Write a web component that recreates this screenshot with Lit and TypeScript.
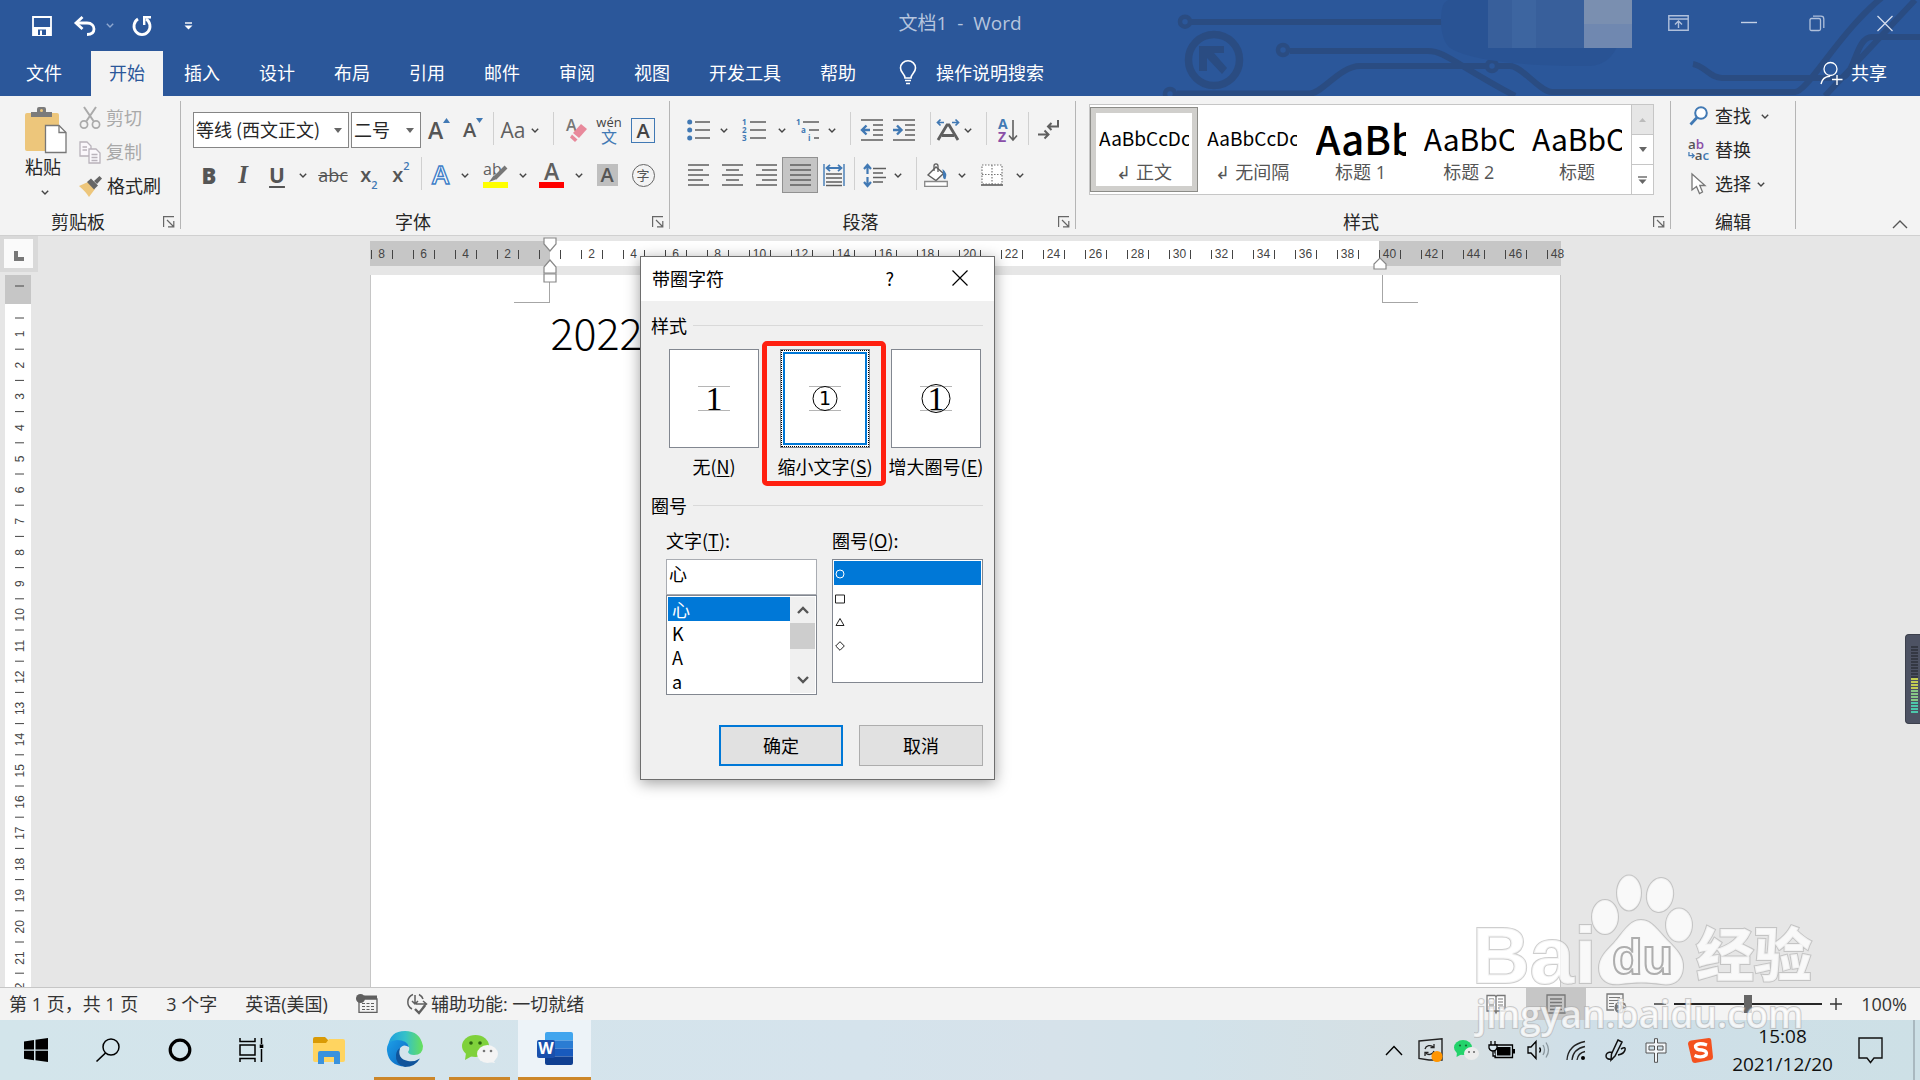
import { LitElement, html, svg, css, nothing } from "lit";
import { customElement, state } from "lit/decorators.js";
import { classMap } from "lit/directives/class-map.js";

const pic = (w: number, h: number, body: unknown) =>
  html`<svg class="pic" width=${w} height=${h} viewBox="0 0 ${w} ${h}" aria-hidden="true">${body}</svg>`;

const GREY = "#5f5f5f";
const BLUE = "#4179b4";

const chevron = (color = "#444") =>
  pic(8, 5, svg`<path d="M.8 .8L4 4L7.2 .8" fill="none" stroke=${color} stroke-width="1.4"/>`);
const triangle = (color = "#666") => pic(8, 5, svg`<path d="M0 0H8L4 5Z" fill=${color}/>`);

/* Horizontal strokes given as [x1, x2, y] */
const strokes = (rows: number[][], color = GREY, width = 1.5) =>
  svg`<path d=${rows.map(([a, b, y]) => `M${a} ${y}H${b}`).join("")} stroke=${color} stroke-width=${width} fill="none"/>`;

const icons = {
  save: pic(20, 20, svg`<path d="M1 1H19V19H1Z" fill="none" stroke="#fff" stroke-width="1.8"/><path d="M1 11H19V19H1Z" fill="#fff"/><path d="M6 13.5H14V19H6Z" fill="#2b579a"/><path d="M8 14.5H10V19H8Z" fill="#fff"/>`),
  undo: pic(22, 20, svg`<path d="M2 7H13C18 7 20 10 20 13S18 18.500 13 18.500" fill="none" stroke="#fff" stroke-width="2.800"/><path d="M8.500 1L2 7L8.500 13" fill="none" stroke="#fff" stroke-width="2.800"/>`),
  redo: pic(20, 20, svg`<path d="M6 3A8 8.400 0 1 0 14 3" fill="none" stroke="#fff" stroke-width="2.800"/><path d="M11 1.200H19M12.200 1V9" fill="none" stroke="#fff" stroke-width="2.400"/>`),
  custom: pic(9, 8, svg`<path d="M1 1H8" stroke="#fff" stroke-width="1.400"/><path d="M.5 3.500H8.500L4.500 7.500Z" fill="#fff"/>`),
  bulb: pic(18, 25, svg`<path d="M6 18C6 14 1.500 13 1.500 8A7.500 7.200 0 0 1 16.500 8C16.500 13 12 14 12 18Z" fill="none" stroke="#fff" stroke-width="1.600"/><path d="M6 20.500H12M7 23.500H11" stroke="#fff" stroke-width="1.500"/>`),
  ribbonOpts: pic(21, 17, svg`<path d="M.8 .8H20.200V15.200H.8ZM.8 4H20.200M10.500 13V6.500M7 9.500L10.500 6L14 9.500" fill="none" stroke="#b0c0db" stroke-width="1.400"/>`),
  minimize: pic(16, 17, svg`<path d="M0 7.500H16" stroke="#c4d0e4" stroke-width="1.400"/>`),
  restore: pic(16, 17, svg`<path d="M1 5Q1 3.500 2.500 3.500H10Q11.500 3.500 11.500 5V14Q11.500 15.500 10 15.500H2.500Q1 15.500 1 14ZM4 1.200H12Q14.800 1.200 14.800 4V13" fill="none" stroke="#b0c0db" stroke-width="1.300"/>`),
  close: pic(16, 17, svg`<path d="M.5 1L15.500 16M15.500 1L.5 16" stroke="#d5dded" stroke-width="1.300"/>`),
  share: pic(23, 24, svg`<circle cx="10.500" cy="8" r="6.500" fill="none" stroke="#fff" stroke-width="1.300"/><path d="M1 23Q2.500 15.500 10 15.200M17 14V24M12 18.500H22.500" fill="none" stroke="#fff" stroke-width="1.400"/>`),
  paste: pic(42, 47, svg`<rect x="0" y="6" width="34" height="38" rx="2" fill="#edc67b"/><path d="M6 5H12V2Q12 0 14 0H19Q21 0 21 2V5H27V10H6Z" fill="#7b7b7b"/><circle cx="16.500" cy="3.500" r="1.500" fill="#edc67b"/><path d="M20.500 18.500H34L41 25.500V45.500H20.500Z" fill="#fff" stroke="#777" stroke-width="1.300"/><path d="M34 18.500V25.500H41" fill="none" stroke="#777" stroke-width="1.300"/>`),
  cut: pic(22, 22, svg`<path d="M5 0L14.500 14M17 0L7.500 14" stroke="#aaa" stroke-width="2"/><circle cx="5" cy="17.500" r="3.600" fill="none" stroke="#aaa" stroke-width="1.700"/><circle cx="17" cy="17.500" r="3.600" fill="none" stroke="#aaa" stroke-width="1.700"/>`),
  copy: pic(22, 23, svg`<g fill="#faf7fb" stroke="#b9b3bb" stroke-width="1.300"><path d="M1 1H8L12 5V15H1Z"/><path d="M10 8H17L21 12V22H10Z"/><path d="M3.500 6H8M3.500 9H8M12.500 13.500H18.500M12.500 16.500H18.500M12.500 19.500H18.500"/></g>`),
  brush: pic(23, 21, svg`<path d="M0 10L9 6L16 13L10 21Q7 16 0 10Z" fill="#edc67b"/><path d="M8 6L12 2.500L19 9.500L15 13.500Z" fill="#666"/><path d="M15 5L20.500 0L23 2.500L18 8Z" fill="#666"/>`),
  launch: pic(12, 12, svg`<path d="M.6 11V.6H11M4 4L10.500 10.500M10.800 5V10.800H5" fill="none" stroke="#666" stroke-width="1.200"/>`),
  bullets: pic(23, 22, svg`<g fill=${BLUE}><circle cx="2.700" cy="3" r="2.500"/><circle cx="2.700" cy="11" r="2.500"/><circle cx="2.700" cy="19" r="2.500"/></g>${strokes([[8, 23, 3], [8, 23, 11], [8, 23, 19]])}`),
  numbering: pic(24, 24, svg`${strokes([[8, 24, 4], [8, 24, 12], [8, 24, 20]])}<g class="tiny"><text x="0" y="7">1</text><text x="0" y="15">2</text><text x="0" y="23">3</text></g>`),
  multilevel: pic(24, 24, svg`${strokes([[7, 23, 4], [13, 23, 12], [18, 23, 20]])}<g class="tiny"><text x="0" y="7">1</text><text x="5" y="15">a</text><text x="12" y="23">i</text></g>`),
  outdent: pic(22, 22, svg`${strokes([[0, 22, 1], [12, 22, 6], [12, 22, 11], [12, 22, 16], [0, 22, 21]])}<path d="M9 11H2M5.500 6.500L1 11L5.500 15.500" fill="none" stroke=${BLUE} stroke-width="2.400"/>`),
  indent: pic(22, 22, svg`${strokes([[0, 22, 1], [12, 22, 6], [12, 22, 11], [12, 22, 16], [0, 22, 21]])}<path d="M0 11H7M4 6.500L8.500 11L4 15.500" fill="none" stroke=${BLUE} stroke-width="2.400"/>`),
  scaleA: pic(24, 22, svg`<path d="M8 3.500H1.500M4.500 .5L1.500 3.500L4.500 6.500M16 3.500H22.500M19.500 .5L22.500 3.500L19.500 6.500" fill="none" stroke=${BLUE} stroke-width="1.700"/><path d="M2 21L11 6H13L22 21M6 16.500H18" fill="none" stroke=${GREY} stroke-width="2.800"/>`),
  sort: pic(20, 24, svg`<text class="sortA" x="0" y="11">A</text><text class="sortZ" x="0" y="24">Z</text><path d="M15 2V21M11 17.500L15 22L19 17.500" fill="none" stroke=${GREY} stroke-width="1.600"/>`),
  marks: pic(21, 20, svg`<path d="M20 0V6.500H10M13.500 3L10 6.500L13.500 10M0 14.500H10M6.500 10.500L10.500 14.500L6.500 18.500" fill="none" stroke=${GREY} stroke-width="2"/>`),
  left: pic(21, 22, strokes([[0, 21, 1], [0, 15, 6], [0, 21, 11], [0, 15, 16], [0, 21, 21]])),
  center: pic(21, 22, strokes([[0, 21, 1], [4, 17, 6], [0, 21, 11], [4, 17, 16], [0, 21, 21]])),
  right: pic(21, 22, strokes([[0, 21, 1], [6, 21, 6], [0, 21, 11], [6, 21, 16], [0, 21, 21]])),
  justify: pic(21, 22, strokes([[0, 21, 1], [0, 21, 6], [0, 21, 11], [0, 21, 16], [0, 21, 21]])),
  spread: pic(22, 22, svg`${strokes([[3, 19, 10], [3, 19, 14], [3, 19, 18], [3, 19, 21.5]])}<path d="M1 0V22M21 0V22" stroke=${BLUE} stroke-width="1.400"/><path d="M4 4H18M7 .8L3.500 4L7 7.200M15 .8L18.500 4L15 7.200" fill="none" stroke=${BLUE} stroke-width="1.800"/>`),
  lineGap: pic(23, 23, svg`${strokes([[10, 23, 4.5], [10, 20, 9], [10, 23, 13.5], [10, 20, 18]])}<path d="M4.500 1V10M1 5L4.500 1L8 5M4.500 13V22M1 18L4.500 22L8 18" fill="none" stroke=${BLUE} stroke-width="2.200"/>`),
  bucket: pic(25, 24, svg`<path d="M4 12L12 4L19.500 10.500L12 17.500Z" fill="#fff" stroke=${GREY} stroke-width="1.400"/><path d="M10 8V3Q10 .8 12 .8T14 3V9" fill="none" stroke=${GREY} stroke-width="1.300"/><path d="M18.500 6Q24 10 21.500 16Q18.500 17 19 11Z" fill=${BLUE}/><path d="M.7 18.500H23.300V23.300H.7Z" fill="#fff" stroke="#888" stroke-width="1.300"/>`),
  borders: pic(22, 22, svg`<path d="M1 1H21V20H1ZM11 1V20M1 10.500H21" fill="#fff" stroke="#777" stroke-width="1.200" stroke-dasharray="1.500 1.500"/><path d="M0 21H22" stroke=${GREY} stroke-width="1.600"/>`),
  find: pic(19, 20, svg`<circle cx="12" cy="7" r="5.800" fill="#fff" stroke=${BLUE} stroke-width="2"/><path d="M8 11.500L1.500 18.500" stroke=${BLUE} stroke-width="2.800"/>`),
  pointer: pic(15, 22, svg`<path d="M1 1V17L5.500 13.500L8.500 20.500L11.500 19L8.800 12.500H14Z" fill="#fff" stroke="#777" stroke-width="1.300"/>`),
  collapse: pic(16, 9, svg`<path d="M1 8L8 1L15 8" fill="none" stroke="#555" stroke-width="1.400"/>`),
  macro: pic(22, 19, svg`<path d="M3 5H21V18.300H3Z" fill="#f3f3f3" stroke=${GREY} stroke-width="1.300"/><path d="M8 1.500H21V5H8Z" fill=${GREY}/><circle cx="4.500" cy="4.500" r="4.500" fill=${GREY}/><path d="M6 9.500H18M6 12.500H18M6 15.500H18" stroke=${GREY} stroke-width="1.200" stroke-dasharray="3 1.500"/>`),
  access: pic(22, 22, svg`<path d="M7 1.500A8 8 0 0 0 6 16M13 1.500A8 8 0 0 1 17 6M9 2V11M6 8L9 11L12 8M10 11H20M17 8L20.500 11L17 14" fill="none" stroke=${GREY} stroke-width="1.500"/><path d="M9 16L13 20L19 12.500" fill="none" stroke=${GREY} stroke-width="2.400"/>`),
  read: pic(20, 20, svg`<path d="M1 1.500H9L10 3L11 1.500H19V17H11L10 19L9 17H1ZM10 3V19" fill="#fff" stroke="#777" stroke-width="1.300"/>${strokes([[3, 8, 5], [3, 8, 8], [3, 8, 11], [3, 8, 14], [12, 17, 5], [12, 17, 8], [12, 17, 11], [12, 17, 14]], "#777", 1.2)}`),
  print: pic(20, 20, svg`<path d="M1 1H19V19H1Z" fill="none" stroke="#777" stroke-width="1.300"/>${strokes([[4, 16, 5], [4, 16, 8.5], [4, 16, 12], [4, 16, 15.5]], "#777", 1.3)}`),
  web: pic(21, 21, svg`<path d="M8 17H1V1H17V8" fill="none" stroke="#777" stroke-width="1.300"/>${strokes([[3, 14, 4.5], [3, 14, 7.5], [3, 8, 10.5], [3, 8, 13.5]], "#777", 1.2)}<circle cx="14.500" cy="14.500" r="6" fill="#777"/><path d="M11 11Q14 11 14 14T11 16M16 10.500Q16 13 19.500 13.500M15 19Q15 16 18 16.500" stroke="#eee" stroke-width="1.300" fill="none"/>`),
  windows: pic(24, 24, svg`<path d="M0 3.500L10 2V11.500H0ZM11.500 1.800L24 0V11.500H11.500ZM0 12.700H10V22.200L0 20.700ZM11.500 12.700H24V24L11.500 22.300Z" fill="#000"/>`),
  search: pic(26, 24, svg`<circle cx="16" cy="9" r="8" fill="none" stroke="#000" stroke-width="1.500"/><path d="M10.500 15L1.500 23.500" stroke="#000" stroke-width="1.700"/>`),
  cortana: pic(24, 24, svg`<circle cx="12" cy="12" r="9.800" fill="none" stroke="#000" stroke-width="3.200"/>`),
  taskview: pic(26, 24, svg`<path d="M1 0V3.500H16V0M1 24V20.500H16V24M1 7H16V17H1ZM22.500 0V6M22.500 11V24" fill="none" stroke="#000" stroke-width="1.500"/><path d="M20.700 6.500H24.300V10H20.700Z"/>`),
  folder: pic(32, 27, svg`<path d="M0 2Q0 0 2 0H12L15 3V8H0Z" fill="#d99a06"/><path d="M0 6H13L16 2H30Q32 2 32 4V23Q32 25 30 25H2Q0 25 0 23Z" fill="#ffd460"/><path d="M5 27V16Q5 14 7 14H25Q27 14 27 16V27H21V20H11V27Z" fill="#3a92dd"/>`),
  edge: pic(36, 36, svg`
    <defs>
      <linearGradient id="edgeTop" x1="0" x2="1"><stop offset="0" stop-color="#1c9de0"/><stop offset=".5" stop-color="#35c1c8"/><stop offset="1" stop-color="#67e05a"/></linearGradient>
      <linearGradient id="edgeLeft" x1="0" y1="0" x2="1" y2="1"><stop offset="0" stop-color="#1d9fe8"/><stop offset="1" stop-color="#0a63bd"/></linearGradient>
    </defs>
    <path d="M1 15Q3 0 18 0T36 15Q36 24 27 24Q22 24 21 21Q24 17 20 13Q12 6 1 15Z" fill="url(#edgeTop)"/>
    <path d="M0 20Q-1 10 10 9Q20 9 22 16Q16 12 12.500 18Q9 27 18 35.500Q2 35 0 20Z" fill="url(#edgeLeft)"/>
    <path d="M13 17Q10 28 21 30Q28 31 33 27.500Q28 36 18 36Q8 33 9 24Q9.500 19 13 17Z" fill="#10549b"/>`),
  wechat: pic(36, 28, svg`<ellipse cx="13.500" cy="11" rx="13.500" ry="11" fill="#7fd13b"/><path d="M4 18L3 25L10 21Z" fill="#7fd13b"/><circle cx="9" cy="8" r="1.800" fill="#2c6410"/><circle cx="18" cy="8" r="1.800" fill="#2c6410"/><ellipse cx="25.500" cy="19" rx="10.500" ry="9" fill="#f4f4f4"/><path d="M31 25L33 28L27 27Z" fill="#f4f4f4"/><circle cx="22" cy="16" r="1.300" fill="#777"/><circle cx="29" cy="16" r="1.300" fill="#777"/>`),
  word: pic(36, 33, svg`<path d="M8 2Q8 0 10 0H34Q36 0 36 2V8.500H8Z" fill="#41a5ee"/><path d="M8 8.500H36V16.500H8Z" fill="#2b7cd3"/><path d="M8 16.500H36V24.500H8Z" fill="#185abd"/><path d="M8 24.500H36V31Q36 33 34 33H10Q8 33 8 31Z" fill="#103f91"/><rect x="0" y="8" width="18" height="18" rx="2" fill="#1a50ac"/><text class="wordW" x="9" y="22" text-anchor="middle">W</text>`),
  trayUp: pic(18, 11, svg`<path d="M1 10L9 1.500L17 10" fill="none" stroke="#000" stroke-width="1.400"/>`),
  traySync: pic(25, 24, svg`<path d="M1 3L24 .8V22H11L1 20.500Z" fill="none" stroke="#222" stroke-width="1.400"/><path d="M7 11A5 4.500 0 0 1 15.500 9M16 6V9.500H12.500M16 13A5 4.500 0 0 1 8 15.500M7 18V14.500H10.500" fill="none" stroke="#222" stroke-width="1.300"/><circle cx="19" cy="18.500" r="5.500" fill="#ff9500"/>`),
  trayChat: pic(25, 20, svg`<ellipse cx="9" cy="7.500" rx="9" ry="7.500" fill="#23d36b"/><path d="M3 12L2.500 17L8 14Z" fill="#23d36b"/><circle cx="6" cy="5.500" r="1.100" fill="#156b35"/><circle cx="12" cy="5.500" r="1.100" fill="#156b35"/><ellipse cx="17.500" cy="13.500" rx="7.500" ry="6.500" fill="#ececec"/><circle cx="15" cy="12" r="1" fill="#666"/><circle cx="20" cy="12" r="1" fill="#666"/>`),
  battery: pic(26, 18, svg`<path d="M6 4H23.500V16.500H6Z" fill="none" stroke="#000" stroke-width="1.300"/><path d="M8 6H21.500V14.500H8ZM24 8H26V12.500H24Z"/><path d="M2 0V4M6 0V4M0 4H8V7Q7 10 4 10Q1 10 0 7ZM4 10V15H7" fill="#d5e4ec" stroke="#000" stroke-width="1.300"/>`),
  speaker: pic(23, 20, svg`<path d="M1 7H4L9 1.500V18.500L4 13H1Z" fill="none" stroke="#000" stroke-width="1.300"/><path d="M12.500 7.500Q14.500 10 12.500 12.500" fill="none" stroke="#000" stroke-width="1.300"/><path d="M16 5Q19 10 16 15M19 2.500Q24 10 19 17.500" fill="none" stroke="#8a979e" stroke-width="1.300"/>`),
  wifi: pic(20, 21, svg`<path d="M1 20Q2 5 19 1.500M6 20Q7 9 19 6.500M11 20Q12 13 19 11.500" fill="none" stroke="#222" stroke-width="1.300"/><circle cx="17" cy="18" r="2"/>`),
  pen: pic(22, 22, svg`<path d="M13 1L17 3L10 17L6 21L6.500 15ZM7 13Q1 13 1 17T8 20M16 10Q21 7 20 11T13 16" fill="none" stroke="#111" stroke-width="1.500"/>`),
  ime: pic(22, 25, svg`<path d="M1 5H9.500V.7H12.500V5H21V15H12.500V24.300H9.500V15H1ZM4 8V12H9.500V8ZM12.500 8V12H18V8Z" fill="#f3f7fa" fill-rule="evenodd" stroke="#555" stroke-width="1"/>`),
  sogou: pic(25, 25, svg`<path d="M3 2.500L21 0Q23 0 23.200 2L25 19Q25 21.500 23 22L7 25Q4.500 25 4 23L0 6Q0 3 3 2.500Z" fill="#f4511e"/><path d="M19 7Q10 4 7.500 8Q7 12 14 12Q20 13 18 17Q14 20.500 6.500 17.500" fill="none" stroke="#fff" stroke-width="3.400"/>`),
  notice: pic(25, 27, svg`<path d="M1 1H24V21H16L12.500 25.500L9 21H1Z" fill="none" stroke="#111" stroke-width="1.400"/>`),
};

const tabs = ["开始", "插入", "设计", "布局", "引用", "邮件", "审阅", "视图", "开发工具", "帮助"];

const gallery = [
  { sample: "AaBbCcDc", name: "↲ 正文", kind: "plain" },
  { sample: "AaBbCcDc", name: "↲ 无间隔", kind: "plain" },
  { sample: "AaBb", name: "标题 1", kind: "head1" },
  { sample: "AaBbC", name: "标题 2", kind: "head2" },
  { sample: "AaBbC", name: "标题", kind: "head2" },
];

const tileLines = svg`<path d="M0 2.500H32M0 26.500H32" stroke="#b5b5b5" stroke-width="1"/>`;
const tiles = [
  { text: "无", key: "N", art: pic(32, 30, svg`${tileLines}<text class="serif1" x="16" y="26" text-anchor="middle">1</text>`) },
  { text: "缩小文字", key: "S", art: pic(32, 30, svg`${tileLines}<circle cx="16" cy="14.500" r="12" fill="#fff" stroke="#000"/><text class="sans1" x="16" y="21" text-anchor="middle">1</text>`) },
  { text: "增大圈号", key: "E", art: pic(32, 30, svg`${tileLines}<text class="serif1" x="16" y="26" text-anchor="middle">1</text><circle cx="16" cy="14.500" r="14" fill="none" stroke="#000"/>`) },
];

const shapes = [
  svg`<circle cx="5" cy="5" r="4"/>`,
  svg`<path d="M.5 2H9.500V10H.5Z"/>`,
  svg`<path d="M5 1.500L9 8.500H1Z"/>`,
  svg`<path d="M5 .7L9.300 5L5 9.300L.7 5Z"/>`,
];

const tray = [
  { icon: icons.trayUp, name: "显示隐藏的图标", width: 36 },
  { icon: icons.traySync, name: "更新", width: 36 },
  { icon: icons.trayChat, name: "微信消息", width: 36 },
  { icon: icons.battery, name: "电池", width: 36 },
  { icon: icons.speaker, name: "音量", width: 36 },
  { icon: icons.wifi, name: "网络", width: 40 },
  { icon: icons.pen, name: "手写笔", width: 40 },
  { icon: icons.ime, name: "输入法", width: 40 },
  { icon: icons.sogou, name: "搜狗", width: 48 },
];

@customElement("app-root")
export class AppRoot extends LitElement {
  @state() private tab = 0;
  @state() private tile = 1;
  @state() private glyph = 0;
  @state() private ring = 0;

  static styles = css`
    :host {
      display: flex;
      flex-direction: column;
      position: relative;
      height: 100vh;
      overflow: hidden;
      font: 18px/24px "Open Sans", "Noto Sans CJK SC", sans-serif;
      color: #262626;
      background: #e6e6e6;
    }
    * { box-sizing: border-box; }
    button, input, select { font: inherit; color: inherit; margin: 0; }
    button { border: 0; padding: 0; background: none; display: flex; align-items: center; justify-content: center; white-space: nowrap; }
    .pic { display: block; flex: none; overflow: visible; }

    .head { position: relative; background: #2b579a; color: #fff; overflow: hidden; flex: none; }
    .circuit { position: absolute; top: 0; right: 0; }
    .titlebar { position: relative; display: grid; grid-template-columns: 1fr auto 1fr; align-items: center; height: 51px; padding: 0 27px 12px; }
    .quick { display: flex; align-items: center; padding: 12px 0 0 5px; }
    .quick button { margin-right: 10px; }
    .quick .save { margin-right: 22px; }
    .quick .redo { margin: 0 32px 0 8px; }
    .doc-title { margin: 0; padding-top: 6px; font-size: 19px; font-weight: 400; color: #b6c5de; white-space: pre; }
    .controls { display: flex; justify-content: flex-end; align-items: center; gap: 52px; padding-top: 8px; }
    .tabs { position: relative; display: flex; height: 45px; padding: 0 33px 0 8px; }
    .tabs button { padding-bottom: 2px; }
    .tabs .tab { padding: 0 18px 2px; margin-right: 3px; }
    .tabs .file { margin-right: 11px; }
    .tab.on { background: #f3f3f3; color: #2b579a; }
    .tell { gap: 19px; margin-left: 22px; }
    .share { gap: 8px; margin-left: auto; }

    .ribbon { display: flex; flex: none; height: 140px; padding: 5px 12px 6px 0; background: #f3f3f3; border-bottom: 1px solid #d0d0d0; }
    .group { display: flex; flex-direction: column; border-right: 1px solid #b5b5b5; }
    .group .content { flex: 1; }
    .caption { display: flex; align-items: center; height: 14px; line-height: 14px; padding-right: 5px; }
    .caption span { flex: 1; text-align: center; }
    .caption button { width: 19px; justify-content: flex-end; }
    .edit .caption { padding: 0; }
    .clip { width: 181px; }
    .fonts { width: 489px; }
    .para { width: 406px; }
    .styles { width: 595px; }
    .edit { width: 125px; }
    .clip .content { display: flex; padding-left: 25px; }
    .paste { flex-direction: column; justify-content: flex-start; width: 54px; align-items: flex-start; padding-top: 6px; }
    .paste .pic:last-child { margin: 10px 0 0 16px; }
    .paste .label { line-height: 26px; }
    .stack button { height: 34px; gap: 5px; }
    .stack .off { color: #a9a9a9; }
    .row { display: flex; align-items: center; height: 36px; }
    .fonts .content, .para .content { display: flex; flex-direction: column; gap: 9px; padding: 11px 12px 0; }
    .row button, .row .sep { height: 36px; flex: none; }
    .row .sep { display: flex; justify-content: center; }
    .row .sep::before { content: ""; width: 1px; height: 33px; background: #d0d0d0; }
    .w8 { width: 8px; } .w12 { width: 12px; } .w16 { width: 16px; } .w20 { width: 20px; }
    .w24 { width: 24px; } .w28 { width: 28px; } .w32 { width: 32px; } .w36 { width: 36px; }
    .w40 { width: 40px; } .w44 { width: 44px; } .w48 { width: 48px; }
    .pick { display: grid; align-items: center; margin-right: 2px; }
    .pick select { grid-area: 1 / 1; height: 36px; width: 100%; padding: 0 0 2px 2px; border: 1px solid #858585; border-radius: 0; background: #fff; appearance: none; font-family: "Noto Sans CJK SC", sans-serif; }
    .pick .pic { grid-area: 1 / 1; justify-self: end; margin-right: 7px; pointer-events: none; }
    .family { width: 156px; }
    .size { width: 70px; margin: 0; }
    .glyph { color: #555; font-weight: 600; }
    .grow { font-size: 23px; } .shrink { font-size: 20px; }
    .glyph .pic { align-self: flex-start; margin-top: 6px; }
    .row .case { font-size: 21px; color: #5f5f5f; }
    .row .bold { font-size: 22px; font-weight: 800; }
    .row .ital { font: italic 700 25px "Liberation Serif", serif; }
    .row .under { font-size: 21px; font-weight: 700; text-decoration: underline; text-underline-offset: 3px; text-decoration-thickness: 2px; }
    .row .strike { font-size: 18px; font-weight: 400; text-decoration: line-through; }
    .script { font-size: 20px; }
    .script small { font-size: 11px; color: #4179b4; }
    .script .sub { align-self: flex-end; line-height: 16px; }
    .script .sup { align-self: flex-start; line-height: 18px; }
    .fx { fill: #fff; stroke: #3f7fc8; stroke-width: 1.400px; font: 600 26px "Open Sans", sans-serif; }
    .inkA { font: 600 23px "Open Sans", sans-serif; fill: #5f5f5f; }
    .inkab { font: 16px "Open Sans", sans-serif; fill: #5f5f5f; }
    .eraseA { font: 600 16px "Open Sans", sans-serif; fill: #777; }
    .phonetic { flex-direction: column; font-size: 13px; line-height: 12px; color: #444; }
    .phonetic b { font: 400 16px/16px "Noto Sans CJK SC", sans-serif; color: #4179b4; }
    .boxed span { width: 24px; height: 25px; border: 1px solid #4179b4; font-size: 20px; line-height: 23px; color: #444; }
    .shaded span { width: 21px; height: 22px; background: #bfbfbf; font-size: 20px; line-height: 22px; color: #555; }
    .ringed span { width: 23px; height: 23px; border: 1px solid #666; border-radius: 50%; font: 13px/20px "Noto Sans CJK SC", sans-serif; color: #555; }
    .tiny { font: 700 8px "Open Sans", sans-serif; fill: #4179b4; }
    .sortA { font: 700 14px "Open Sans", sans-serif; fill: #4179b4; }
    .sortZ { font: 700 14px "Open Sans", sans-serif; fill: #8a4fa8; }
    .pressed { background: #c5c5c5; border: 1px solid #919191; }

    .styles .content { padding: 3px 16px 0 13px; }
    .gallery { display: flex; height: 91px; border: 1px solid #c6c6c6; background: #fff; }
    .card { flex: 1; flex-direction: column; margin: 2px 0; padding: 0 4px; overflow: hidden; color: #555; }
    .card.on { box-shadow: inset 0 0 0 1px #8c8c88, inset 0 0 0 6px #d0cfcc; }
    .sample { width: 90px; height: 44px; line-height: 44px; overflow: hidden; text-align: left; color: #000; font-family: "Noto Sans CJK SC", sans-serif; }
    .plain { font-size: 19px; }
    .head1 { font-size: 40px; font-weight: 500; }
    .head2 { font-size: 30px; }
    .nudge { display: flex; flex-direction: column; width: 22px; border-left: 1px solid #c6c6c6; }
    .nudge button { flex: 1; border-bottom: 1px solid #c6c6c6; }
    .nudge button:last-child { border: 0; }
    .nudge .off { background: #e6e6e6; }
    .edit .content { padding-left: 17px; margin-top: -2px; }
    .edit .stack button, .edit .content button { gap: 6px; }
    .edit .content .pic:first-child { width: 21px; }
    .edit .far { margin-left: 4px; }
    .edit .content span > .pic:first-child, .edit .tip .pic { width: 8px; }
    .repl { font: 600 14px "Open Sans", sans-serif; fill: #555; }
    .repl .v { fill: #8a4fa8; } .repl .b { fill: #4179b4; }
    .fold { margin: auto 0 0 auto; }

    .workspace { flex: 1; display: flex; min-height: 0; overflow: hidden; position: relative; }
    .side { width: 38px; flex: none; display: flex; flex-direction: column; }
    .corner { height: 36px; background: #d9d9d9; padding: 3px 5px 4px 4px; }
    .corner button { width: 100%; height: 100%; padding-top: 4px; background: #fafafa; }
    .vruler { width: 26px; flex: 1; margin: 3px 0 0 5px; background: #fff; border-top: 29px solid #c6c6c6; }
    .rule { font: 12px "Liberation Sans", sans-serif; fill: #444; }
    .canvas { flex: 1; display: flex; flex-direction: column; align-items: center; padding: 5px 28px 0 0; }
    .hruler { position: relative; display: flex; width: 1191px; height: 25px; background: linear-gradient(90deg, #c6c6c6 180px, #fff 180px, #fff 1009px, #c6c6c6 1009px); font: 12px/27px "Liberation Sans", sans-serif; color: #444; }
    .cells { display: flex; margin-left: -9px; padding-top: 2px; }
    .cell { display: flex; flex: none; justify-content: center; align-items: center; width: 42px; }
    .cell span { width: 22px; text-align: center; line-height: 9px; height: 9px; border: 1px solid #444; border-width: 0 1px; }
    .cell:last-child span { border-right-color: transparent; }
    .marker { position: absolute; top: -4px; left: 173px; }
    .marker.end { left: 1003px; top: 16px; }
    .page { width: 1191px; flex: 1; margin-top: 9px; background: #fff; border: 1px solid #c6c6c6; border-width: 0 1px; padding: 0 142px 0 143px; }
    .area { display: flex; justify-content: space-between; height: 28px; }
    .area i { width: 36px; border-bottom: 1px solid #a6a6a6; }
    .area i:first-child { border-right: 1px solid #a6a6a6; }
    .area i:last-child { border-left: 1px solid #a6a6a6; }
    .typed { margin: 0 0 0 37px; font: 300 43px/57px "Noto Sans CJK SC", sans-serif; color: #000; }
    .meter { position: absolute; right: 0; top: 398px; width: 15px; height: 90px; padding: 11px 2px 10px 5px; background: #4d5263; border: 1px solid #3c404c; border-right: 0; border-radius: 4px 0 0 4px; display: flex; flex-direction: column; justify-content: space-between; }
    .meter i { height: 2px; background: #343843; }
    .meter .hi { background: #c3cd52; } .meter .mid { background: #86c886; } .meter .lo { background: #4cc7ab; }

    .status { display: flex; flex: none; align-items: center; height: 33px; padding: 0 13px 0 9px; background: #f3f3f3; border-top: 1px solid #c6c6c6; color: #333; }
    .status button { height: 32px; padding-bottom: 1px; }
    .status .info { margin-right: 28px; }
    .status .check { gap: 3px; }
    .views { display: flex; margin-left: auto; }
    .views button { width: 60px; }
    .views .on { background: #c6c6c6; }
    .zoom { display: flex; align-items: center; gap: 8px; margin-left: 8px; }
    .zoom input { appearance: none; width: 148px; height: 18px; background: linear-gradient(#262626, #262626) 0 50% / 100% 2px no-repeat; }
    .zoom input::-webkit-slider-thumb { appearance: none; width: 8px; height: 18px; background: #666; }
    .zoom .pct { margin-left: 11px; }

    .taskbar { display: flex; flex: none; height: 60px; background: linear-gradient(90deg, #d3e5eb, #d5e3ec 45%, #d6e2ea 55%, #d2e2ea 62%, #d6dfe2 76%, #cfdfe8 82%, #cde0e6); color: #111; }
    .apps { display: flex; }
    .apps .sys { width: 72px; }
    .apps .folder { width: 82px; margin-right: 4px; }
    .apps .open { width: 61px; margin-right: 14px; border-bottom: 3px solid #cc8629; }
    .apps .chat { margin-right: 8px; }
    .apps .active { width: 73px; background: #edf3f8; border-bottom: 3px solid #cc8629; }
    .tray { display: flex; align-items: center; margin-left: auto; padding-right: 5px; }
    .clock { display: flex; flex-direction: column; align-items: center; line-height: 28px; font-size: 19px; margin: 0 25px 0 8px; }
    .edgebar { width: 2px; height: 60px; background: #a9b8bf; margin-left: 30px; }

    .dialog { position: absolute; left: 640px; top: 256px; width: 355px; background: #f0f0f0; border: 1px solid #6e6e6e; box-shadow: 0 3px 14px rgba(0, 0, 0, .38); color: #000; font-family: "Noto Sans CJK SC", sans-serif; }
    .dialog header { display: flex; align-items: center; height: 44px; padding: 0 26px 2px 11px; background: #fff; }
    .dialog h2 { margin: 0 auto 0 0; font-size: 18px; font-weight: 400; }
    .dialog header button { margin-left: 58px; }
    .body { padding: 12px 11px 13px 10px; }
    .legend { display: flex; align-items: center; gap: 6px; }
    .legend::after { content: ""; flex: 1; height: 1px; background: #d9d9d9; }
    .tiles { display: flex; gap: 21px; margin: 12px 0 14px 18px; }
    .tile { position: relative; display: flex; flex-direction: column; align-items: center; gap: 6px; width: 90px; padding-bottom: 1px; white-space: nowrap; }
    .tile input { position: absolute; opacity: 0; }
    .face { display: grid; place-items: center; width: 90px; height: 99px; border: 1px solid #828790; background: #fff; }
    .tile.on .face { outline: 2px solid #0078d7; outline-offset: -5px; }
    .tile.on .face::before { content: ""; grid-area: 1 / 1; width: 86px; height: 95px; border: 1px dotted #000; }
    .tile.on .face .pic { grid-area: 1 / 1; }
    .tile.on::after { content: ""; position: absolute; inset: -8px -16px -7px -18px; border: 5px solid #ff2010; border-radius: 5px; }
    u { text-underline-offset: 2px; text-decoration-thickness: 1px; }
    .serif1 { font: 34px "Liberation Serif", serif; }
    .sans1 { font: 19px "DejaVu Sans", sans-serif; }
    .lists { display: grid; grid-template-columns: 1fr 1fr; gap: 15px; margin: 11px 0 30px 15px; align-items: start; }
    .lists label, .lists .lbl { display: block; height: 31px; }
    .lists input { display: block; width: 100%; height: 36px; padding: 0 2px 8px; border: 1px solid #a9acb2; background: #fff; outline: 0; }
    .listbox { display: flex; border: 1px solid #828790; background: #fff; padding: 1px; }
    .options { flex: 1; margin: 0; padding: 0; list-style: none; }
    .options button { width: 100%; height: 24px; justify-content: flex-start; padding: 0 0 1px 4px; }
    .options .on { background: #0078d7; color: #fff; }
    .scroll { display: flex; flex-direction: column; width: 25px; background: #f0f0f0; }
    .scroll button { height: 26px; }
    .scroll i { height: 26px; background: #cdcdcd; margin-bottom: 18px; }
    .rings { height: 124px; fill: none; stroke: #222; }
    .rings .on { stroke: #fff; }
    .rings button { padding: 2px 0 0 1px; }
    .actions { display: flex; justify-content: flex-end; gap: 16px; }
    .actions button { width: 124px; height: 41px; padding-bottom: 2px; background: #e1e1e1; border: 1px solid #adadad; }
    .actions .ok { border: 2px solid #0078d7; }

    .mark { position: absolute; right: 100px; bottom: 18px; pointer-events: none; }
    .mark text, .mark .paw { fill: #fff; fill-opacity: .76; stroke: #adadad; stroke-opacity: .6; stroke-width: 2px; paint-order: stroke; }
    .mark .bai { font: 700 80px "Liberation Sans", sans-serif; }
    .mark .jing { font: 900 58px "Noto Sans CJK SC", sans-serif; }
    .mark .du { font: 700 50px "Liberation Sans", sans-serif; fill: none; stroke: #a5a5a5; stroke-opacity: .9; }
    .mark .url { font: 600 37px "Open Sans", sans-serif; }
    .wordW { font: 700 16px "Open Sans", sans-serif; fill: #fff; }
  `;

  private head() {
    return html`<div class="head">
      <svg class="circuit" width="770" height="96" viewBox="0 0 770 96" aria-hidden="true">
        <g fill="none" stroke="#2a4c82" stroke-width="6">
          <g stroke-width="4.500"><circle cx="35" cy="21.700" r="5"/><circle cx="133" cy="50" r="5"/><circle cx="20" cy="94" r="5"/><circle cx="342" cy="66" r="5"/></g>
          <path d="M41 22H292M140 51H278C295 51 305 64 365 96M27 93.500H160C172 93.500 190 66 210 66H336M348 66H360C372 66 390 92 402 92H645C658 92 690 30 735 -5M543 64C555 66 560 78 572 78H690C705 78 705 37 722 37H770M675 96L765 0"/>
          <circle cx="64" cy="60" r="25.500" stroke-width="7.500"/>
        </g>
        <path d="M49 46H74V53H64L77 68L72 74L57 58V71H49Z" fill="#2a4c82"/>
        <path d="M291 20Q291 0 300 0H475Q475 64 440 66Q330 66 300 48Q291 40 291 20Z" fill="#295394"/>
        <path d="M338 0H362V48H338ZM386 0H434V48H386Z" fill="#385f9b"/><path d="M362 0H386V48H362Z" fill="#3d65a0"/><path d="M434 0H482V48H434Z" fill="#7a8fb0"/><path d="M434 24H482V48H434Z" fill="#7088b0"/>
      </svg>
      <div class="titlebar">
        <div class="quick">
          <button class="save" aria-label="保存">${icons.save}</button><button aria-label="撤消">${icons.undo}</button>
          <button aria-label="撤消选项">${chevron("#8fa8d0")}</button>
          <button class="redo" aria-label="重复">${icons.redo}</button><button aria-label="自定义">${icons.custom}</button>
        </div>
        <h1 class="doc-title">文档1  -  Word</h1>
        <div class="controls">
          <button aria-label="功能区显示选项">${icons.ribbonOpts}</button><button aria-label="最小化">${icons.minimize}</button>
          <button aria-label="还原">${icons.restore}</button><button aria-label="关闭">${icons.close}</button>
        </div>
      </div>
      <nav class="tabs">
        <button class="tab file">文件</button>
        ${tabs.map((t, i) => html`<button class=${classMap({ tab: true, on: i === this.tab })} @click=${() => (this.tab = i)}>${t}</button>`)}
        <button class="tell">${icons.bulb}<span>操作说明搜索</span></button>
        <button class="share">${icons.share}<span>共享</span></button>
      </nav>
    </div>`;
  }

  private caption(text: string, launcher = true) {
    return html`<div class="caption"><span>${text}</span>${launcher ? html`<button aria-label="${text}设置">${icons.launch}</button>` : nothing}</div>`;
  }

  private tool(width: number, name: string, body: unknown, extra = "") {
    return html`<button class="w${width} ${extra}" aria-label=${name}>${body}</button>`;
  }

  private more(width: number, name: string) {
    return this.tool(width, `${name}选项`, chevron());
  }

  private ribbon() {
    const sep = (w: number) => html`<span class="sep w${w}"></span>`;
    return html`<div class="ribbon">
      <section class="group clip">
        <div class="content">
          <button class="paste">${icons.paste}<span class="label">粘贴</span>${chevron()}</button>
          <div class="stack">
            <button class="off">${icons.cut}<span>剪切</span></button>
            <button class="off">${icons.copy}<span>复制</span></button>
            <button>${icons.brush}<span>格式刷</span></button>
          </div>
        </div>
        ${this.caption("剪贴板")}
      </section>
      <section class="group fonts">
        <div class="content">
          <div class="row">
            <span class="pick family"><select aria-label="字体"><option>等线 (西文正文)</option></select>${triangle()}</span>
            <span class="pick size"><select aria-label="字号"><option>二号</option></select>${triangle()}</span>
            ${this.tool(36, "增大字号", html`A${pic(7, 5, svg`<path d="M0 5L3.500 0L7 5Z" fill=${BLUE}/>`)}`, "glyph grow")}
            ${this.tool(32, "减小字号", html`A${pic(7, 5, svg`<path d="M0 0H7L3.500 5Z" fill=${BLUE}/>`)}`, "glyph shrink")}
            ${sep(8)}${this.tool(32, "更改大小写", "Aa", "case")}${this.more(12, "大小写")}${sep(24)}
            ${this.tool(24, "清除格式", pic(22, 24, svg`<text class="eraseA" x="0" y="13">A</text><path d="M7 15L15 6L21 11L13 20Z" fill="#e8899b"/><path d="M6 16.500L11.500 21.500L9 24L4 19.500Z" fill="#e8899b"/>`))}
            ${this.tool(40, "拼音指南", html`<span>wén</span><b>文</b>`, "phonetic")}
            ${this.tool(28, "字符边框", html`<span>A</span>`, "glyph boxed")}
          </div>
          <div class="row">
            ${this.tool(32, "加粗", "B", "glyph bold")}${this.tool(36, "倾斜", "I", "glyph ital")}${this.tool(32, "下划线", "U", "glyph under")}${this.more(20, "下划线")}
            ${this.tool(40, "删除线", "abc", "glyph strike")}
            ${this.tool(32, "下标", html`x<small class="sub">2</small>`, "glyph script")}${this.tool(32, "上标", html`x<small class="sup">2</small>`, "glyph script")}
            ${sep(8)}
            ${this.tool(32, "文本效果", pic(20, 24, svg`<text class="fx" x="1" y="21">A</text>`))}${this.more(16, "文本效果")}
            ${this.tool(44, "突出显示", pic(25, 25, svg`<text class="inkab" x="0" y="12">ab</text><path d="M23 4L12 15" stroke="#777" stroke-width="4"/><path d="M11 12L14 16L6 19Z" fill="#777"/><path d="M0 19H25V25H0Z" fill="#ff0"/>`))}${this.more(12, "突出显示")}
            ${this.tool(44, "字体颜色", pic(25, 25, svg`<text class="inkA" x="5" y="17">A</text><path d="M0 19H25V25H0Z" fill="#f00"/>`))}${this.more(12, "字体颜色")}
            ${this.tool(44, "字符底纹", html`<span>A</span>`, "glyph shaded")}${this.tool(28, "带圈字符", html`<span>字</span>`, "ringed")}
          </div>
        </div>
        ${this.caption("字体")}
      </section>
      <section class="group para">
        <div class="content">
          <div class="row">
            ${this.tool(32, "项目符号", icons.bullets)}${this.more(20, "项目符号")}${this.tool(40, "编号", icons.numbering)}${this.more(16, "编号")}
            ${this.tool(36, "多级列表", icons.multilevel)}${this.more(12, "多级列表")}${sep(24)}
            ${this.tool(20, "减少缩进量", icons.outdent)}${this.tool(44, "增加缩进量", icons.indent)}${sep(8)}
            ${this.tool(28, "中文版式", icons.scaleA)}${this.more(12, "中文版式")}${sep(24)}${this.tool(20, "排序", icons.sort)}${sep(20)}
            ${this.tool(20, "显示编辑标记", icons.marks)}
          </div>
          <div class="row">
            ${this.tool(32, "左对齐", icons.left)}${this.tool(36, "居中", icons.center)}${this.tool(32, "右对齐", icons.right)}
            ${this.tool(36, "两端对齐", icons.justify, "pressed")}${this.tool(32, "分散对齐", icons.spread)}${sep(8)}
            ${this.tool(32, "行距", icons.lineGap)}${this.more(16, "行距")}${sep(20)}
            ${this.tool(20, "底纹", icons.bucket)}${this.more(32, "底纹")}${this.tool(28, "边框", icons.borders)}${this.more(28, "边框")}
          </div>
        </div>
        ${this.caption("段落")}
      </section>
      <section class="group styles">
        <div class="content">
          <div class="gallery">
            ${gallery.map((g, i) => html`<button class=${classMap({ card: true, on: i === 0 })}><span class="sample ${g.kind}">${g.sample}</span><span>${g.name}</span></button>`)}
            <div class="nudge">
              <button class="off" aria-label="上一行">${pic(7, 4, svg`<path d="M0 4L3.500 0L7 4Z" fill="#bbb"/>`)}</button>
              <button aria-label="下一行">${triangle()}</button>
              <button aria-label="其他样式">${pic(9, 8, svg`<path d="M0 1H9" stroke="#666" stroke-width="1.400"/><path d="M.5 3.500H8.500L4.500 8Z" fill="#666"/>`)}</button>
            </div>
          </div>
        </div>
        ${this.caption("样式")}
      </section>
      <section class="group edit">
        <div class="content stack">
          <button>${icons.find}<span>查找</span><span class="far">${chevron()}</span></button>
          <button>${pic(22, 24, svg`<g class="repl"><text x="0" y="11">a<tspan class="v">b</tspan></text><text x="7" y="23">a<tspan class="b">c</tspan></text></g><path d="M1 14V18H6M4 15.500L6.500 18L4 20.500" fill="none" stroke=${BLUE} stroke-width="1.300"/>`)}<span>替换</span></button>
          <button>${icons.pointer}<span>选择</span>${chevron()}</button>
        </div>
        ${this.caption("编辑", false)}
      </section>
      <button class="fold" aria-label="折叠功能区">${icons.collapse}</button>
    </div>`;
  }

  private workspace() {
    const labels = [8, 6, 4, 2, 0, ...Array.from({ length: 24 }, (_, i) => (i + 1) * 2)];
    const pitch = 31.2;
    return html`<main class="workspace">
      <div class="side">
        <div class="corner"><button aria-label="制表符">${pic(10, 10, svg`<path d="M0 0H4V6H10V10H0Z" fill="#777"/>`)}</button></div>
        <div class="vruler">
          <svg class="pic rule" width="26" height="683" aria-hidden="true">
            <path d="M10 -18H19" stroke="#444"/>
            ${Array.from({ length: 22 }, (_, i) => svg`<path d="M10 0H19" stroke="#444" transform="translate(0 ${14 + i * pitch})"/><text text-anchor="middle" transform="translate(19 ${30 + i * pitch}) rotate(-90)">${i + 1}</text>`)}
          </svg>
        </div>
      </div>
      <div class="canvas">
        <div class="hruler">
          <div class="cells">${labels.map((n) => html`<div class="cell"><span>${n || ""}</span></div>`)}</div>
          <svg class="marker" width="14" height="47" viewBox="0 0 14 47" aria-hidden="true"><g fill="#fff" stroke="#888" stroke-width="1.200"><path d="M1 1H13V7L7 14L1 7Z"/><path d="M1 36V30L7 23L13 30V36Z"/><path d="M1 37H13V45H1Z"/></g></svg>
          <svg class="marker end" width="14" height="14" viewBox="0 0 14 14" aria-hidden="true"><path d="M1 12V7L7 1L13 7V12Z" fill="#fff" stroke="#888" stroke-width="1.200"/></svg>
        </div>
        <div class="page">
          <div class="area"><i></i><i></i></div>
          <p class="typed">2022</p>
        </div>
      </div>
      <div class="meter">${Array.from({ length: 23 }, (_, i) => html`<i class=${i < 11 ? "" : i < 15 ? "hi" : i < 19 ? "mid" : "lo"}></i>`)}</div>
    </main>`;
  }

  private status() {
    return html`<footer class="status">
      <button class="info">第 1 页，共 1 页</button><button class="info">3 个字</button><button class="info">英语(美国)</button>
      <button class="info" aria-label="宏">${icons.macro}</button>
      <button class="check">${icons.access}<span>辅助功能: 一切就绪</span></button>
      <div class="views">
        <button aria-label="阅读视图">${icons.read}</button><button class="on" aria-label="页面视图">${icons.print}</button><button aria-label="Web 版式视图">${icons.web}</button>
      </div>
      <div class="zoom">
        <button aria-label="缩小">${pic(12, 12, svg`<path d="M0 6H12" stroke="#333" stroke-width="1.400"/>`)}</button>
        <input type="range" min="0" max="100" .value=${"50"} aria-label="缩放" />
        <button aria-label="放大">${pic(12, 12, svg`<path d="M0 6H12M6 0V12" stroke="#333" stroke-width="1.400"/>`)}</button>
        <button class="pct">100%</button>
      </div>
    </footer>`;
  }

  private taskbar() {
    return html`<div class="taskbar">
      <div class="apps">
        <button class="sys" aria-label="开始菜单">${icons.windows}</button><button class="sys" aria-label="搜索">${icons.search}</button>
        <button class="sys" aria-label="Cortana">${icons.cortana}</button><button class="sys" aria-label="任务视图">${icons.taskview}</button>
        <button class="folder" aria-label="文件资源管理器">${icons.folder}</button>
        <button class="open" aria-label="Edge">${icons.edge}</button><button class="open chat" aria-label="微信">${icons.wechat}</button>
        <button class="active" aria-label="Word">${icons.word}</button>
      </div>
      <div class="tray">
        ${tray.map((t) => this.tool(t.width, t.name, t.icon))}
        <div class="clock"><span>15:08</span><span>2021/12/20</span></div>
        <button aria-label="通知">${icons.notice}</button><span class="edgebar"></span>
      </div>
    </div>`;
  }

  private dialog() {
    return html`<section class="dialog" role="dialog" aria-labelledby="dlg">
      <header>
        <h2 id="dlg">带圈字符</h2>
        <button aria-label="帮助">?</button>
        <button aria-label="关闭">${pic(16, 16, svg`<path d="M.5 .5L15.500 15.500M15.500 .5L.5 15.500" stroke="#000" stroke-width="1.200"/>`)}</button>
      </header>
      <div class="body">
        <div class="legend">样式</div>
        <div class="tiles" role="radiogroup" aria-label="样式">
          ${tiles.map((t, i) => html`<label class=${classMap({ tile: true, on: i === this.tile })}>
            <input type="radio" name="mode" .checked=${i === this.tile} @change=${() => (this.tile = i)} />
            <span class="face">${t.art}</span><span>${t.text}(<u>${t.key}</u>)</span>
          </label>`)}
        </div>
        <div class="legend">圈号</div>
        <div class="lists">
          <div>
            <label for="word">文字(<u>T</u>):</label>
            <input id="word" type="text" value="心" />
            <div class="listbox">
              <ul class="options" role="listbox" aria-label="文字">
                ${["心", "K", "A", "a"].map((g, i) => html`<li><button role="option" class=${i === this.glyph ? "on" : ""} @click=${() => (this.glyph = i)}>${g}</button></li>`)}
              </ul>
              <div class="scroll">
                <button aria-label="向上">${pic(12, 8, svg`<path d="M1 7L6 2L11 7" fill="none" stroke="#555" stroke-width="2.400"/>`)}</button><i></i>
                <button aria-label="向下">${pic(12, 8, svg`<path d="M1 1L6 6L11 1" fill="none" stroke="#555" stroke-width="2.400"/>`)}</button>
              </div>
            </div>
          </div>
          <div>
            <span class="lbl" id="ringLabel">圈号(<u>O</u>):</span>
            <div class="listbox rings">
              <ul class="options" role="listbox" aria-labelledby="ringLabel">
                ${shapes.map((s, i) => html`<li><button role="option" class=${i === this.ring ? "on" : ""} @click=${() => (this.ring = i)}>${pic(10, 10, s)}</button></li>`)}
              </ul>
            </div>
          </div>
        </div>
        <div class="actions"><button class="ok">确定</button><button>取消</button></div>
      </div>
    </section>`;
  }

  private watermark() {
    return html`<svg class="mark" width="346" height="190" viewBox="0 0 346 190" aria-hidden="true">
      <text class="bai" x="-2" y="111">Bai</text>
      <g class="paw">
        <ellipse cx="131" cy="45" rx="13" ry="17"/><ellipse cx="155" cy="21" rx="12" ry="17.500"/>
        <ellipse cx="186" cy="23" rx="13" ry="17" transform="rotate(10 186 23)"/><ellipse cx="205" cy="53" rx="13" ry="16.500"/>
        <path d="M167 48C178 48 184 59 193 68C203 78 210 85 209 96C208 109 199 114 187 112C175 110 160 110 147 112C133 114 125 107 125 96C125 86 132 79 140 71C149 61 155 48 167 48Z"/>
      </g>
      <text class="du" x="138" y="102">du</text>
      <text class="jing" x="222" y="104">经验</text>
      <text class="url" x="2" y="156">jingyan.baidu.com</text>
    </svg>`;
  }

  render() {
    return html`${this.head()}${this.ribbon()}${this.workspace()}${this.status()}${this.taskbar()}${this.dialog()}${this.watermark()}`;
  }
}
